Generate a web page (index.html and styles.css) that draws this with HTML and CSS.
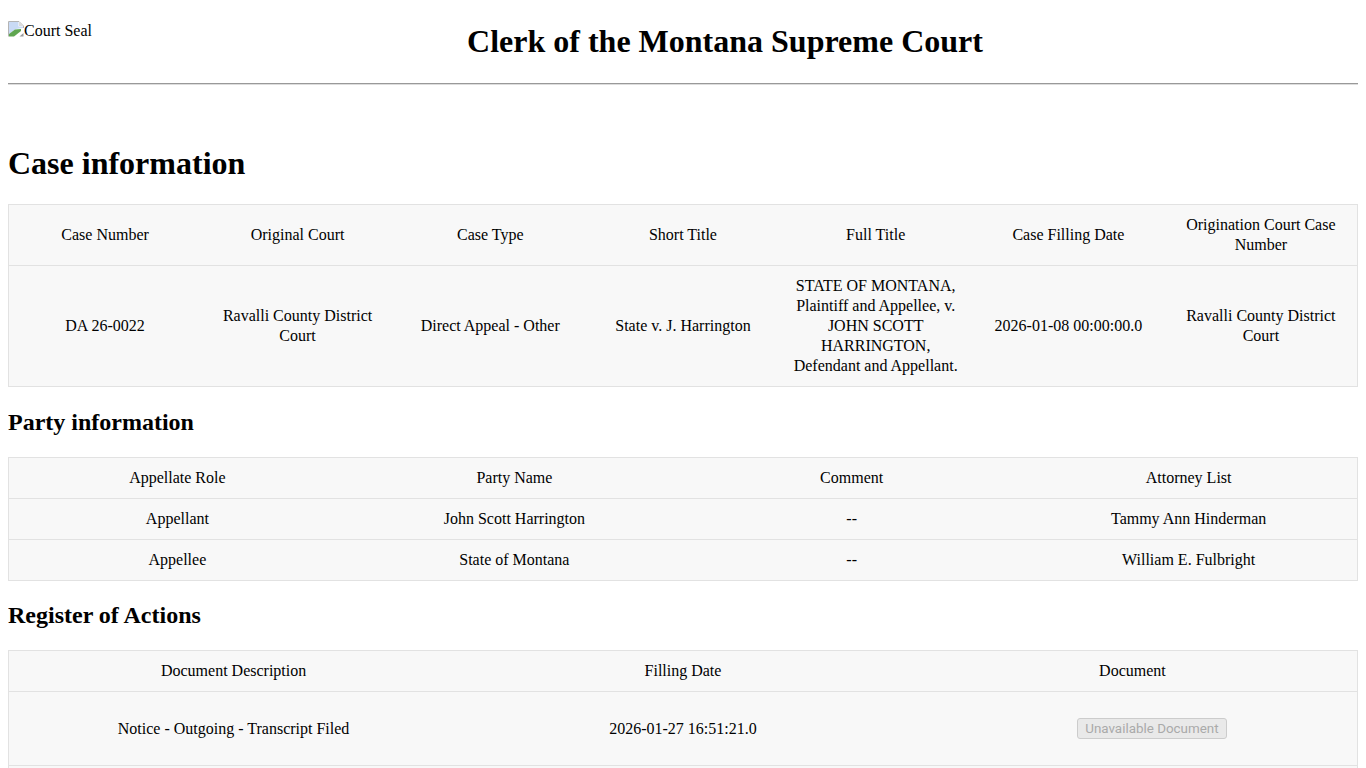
FILE: index.html
```html
<!DOCTYPE html>
<html lang="en">
<head>
<meta charset="utf-8">
<title>Clerk of the Montana Supreme Court</title>
<link rel="stylesheet" href="styles.css">
</head>
<body>
<header class="site-header">
  <div class="seal">
    <svg class="broken" width="16" height="16" viewBox="0 0 16 16" aria-hidden="true">
      <path d="M0.5 15.5V0.5H11L15.5 5V7" fill="none" stroke="#b4b4b4"/>
      <path d="M11 1V5H15Z" fill="#dcdcdc"/>
      <path d="M1 1H10.5V5.5H15V7L8 8L1 13Z" fill="#c9daf5"/>
      <path d="M1 15.5V13L7 8.5L13 8L13 10L6 15.5Z" fill="#5fa650"/>
      <path d="M11.5 15.5L15.5 12V15.5Z" fill="#9a9a9a"/>
    </svg><span class="seal-alt">Court Seal</span>
  </div>
  <h1 class="site-title">Clerk of the Montana Supreme Court</h1>
</header>
<hr class="rule">
<h1 class="page-title">Case information</h1>
<table class="data">
  <tr><td>Case Number</td><td>Original Court</td><td>Case Type</td><td>Short Title</td><td>Full Title</td><td>Case Filling Date</td><td>Origination Court Case Number</td></tr>
  <tr><td>DA 26-0022</td><td>Ravalli County District Court</td><td>Direct Appeal - Other</td><td>State v. J. Harrington</td><td>STATE OF MONTANA, Plaintiff and Appellee, v. JOHN SCOTT HARRINGTON, Defendant and Appellant.</td><td>2026-01-08 00:00:00.0</td><td>Ravalli County District Court</td></tr>
</table>
<h2 class="section-title">Party information</h2>
<table class="data">
  <tr><td>Appellate Role</td><td>Party Name</td><td>Comment</td><td>Attorney List</td></tr>
  <tr><td>Appellant</td><td>John Scott Harrington</td><td>--</td><td>Tammy Ann Hinderman</td></tr>
  <tr><td>Appellee</td><td>State of Montana</td><td>--</td><td>William E. Fulbright</td></tr>
</table>
<h2 class="section-title section-title-tight">Register of Actions</h2>
<table class="data">
  <tr><td>Document Description</td><td>Filling Date</td><td>Document</td></tr>
  <tr class="doc-row"><td>Notice - Outgoing - Transcript Filed</td><td>2026-01-27 16:51:21.0</td><td><button class="doc-btn" disabled>Unavailable Document</button></td></tr>
  <tr class="doc-row"><td>&nbsp;</td><td>&nbsp;</td><td>&nbsp;</td></tr>
</table>
</body>
</html>
```
FILE: styles.css
```css
html { background: #fff; }
body { margin: 8px; color: #000; font-family: "Liberation Serif", "Times New Roman", serif; font-size: 16px; }
.site-header { display: flex; align-items: flex-start; box-sizing: border-box; height: 75px; padding-top: 13px; }
.seal { display: flex; align-items: flex-start; flex: none; line-height: 18px; }
.seal-alt { margin-top: 1px; }
.broken { flex: none; }
.site-title { flex: 1; margin: 2px 0 0; text-align: center; font-size: 32px; line-height: 37px; }
.rule { margin: 0; border: 0; border-top: 1px solid #999; border-bottom: 1px solid #ddd; }
.page-title { margin: 60px 0 22px; font-size: 32px; line-height: 37px; }
.section-title { margin: 21px 0; font-size: 24px; line-height: 28px; }
.section-title-tight { margin: 20px 0 21px; }
.data { width: 100%; table-layout: fixed; border-collapse: collapse; background: #f8f8f8; text-align: center; border-left: 1px solid #e2e2e2; border-right: 1px solid #e2e2e2; }
.data td { padding: 10px; border-top: 1px solid #e2e2e2; border-bottom: 1px solid #e2e2e2; line-height: 20px; }
.doc-row td { padding: 26px 10px; }
.doc-btn { margin-left: 39px; font-family: Roboto, "Liberation Sans", sans-serif; font-size: 13.4px; padding: 1px 7.5px; height: 21px; line-height: 17px; border: 1px solid #ccc; border-radius: 3px; background: #e9e9e9; color: #aaa; }
```
